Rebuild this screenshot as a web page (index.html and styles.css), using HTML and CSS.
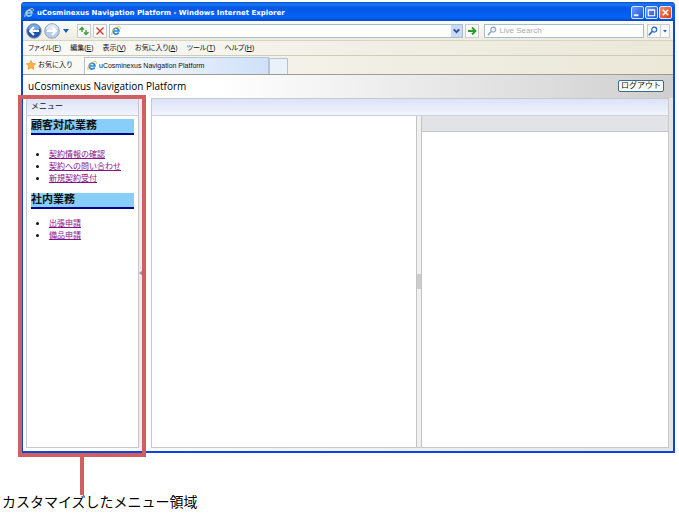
FILE: index.html
```html
<!DOCTYPE html>
<html lang="ja">
<head>
  <meta charset="UTF-8" />
  <meta name="viewport" content="width=device-width, initial-scale=1" />
  <title>uCosminexus Navigation Platform</title>
  <link rel="stylesheet" href="styles.css">
</head>
<body>

<svg class="symbols" aria-hidden="true">
  <symbol id="ie" viewBox="0 0 12 12">
    <path d="M9.2 7.8A3.5 3.5 0 1 1 9.6 6H3" fill="none" stroke="#2786dc" stroke-width="2"/>
    <path d="M1.2 11C-.5 8 6-.2 10.5.8c1.3.5.7 2 .1 2.800" fill="none" stroke="#e9b32c" stroke-width="1.200"/>
  </symbol>
  <symbol id="ie-light" viewBox="0 0 12 12">
    <path d="M9.2 7.8A3.5 3.5 0 1 1 9.6 6H3" fill="none" stroke="#8fd0ff" stroke-width="2"/>
    <path d="M1.2 11C-.5 8 6-.2 10.5.8c1.3.5.7 2 .1 2.800" fill="none" stroke="#f3cf62" stroke-width="1.200"/>
  </symbol>
  <symbol id="lens" viewBox="0 0 12 12">
    <path d="M1 11l4-4.500" stroke="currentColor" stroke-width="1.800"/>
    <circle cx="7.500" cy="4.300" r="3" fill="#eef6ff" stroke="currentColor" stroke-width="1.300"/>
  </symbol>
</svg>

<div class="window">
  <header class="title-bar">
    <svg class="icon"><use href="#ie-light"/></svg>
    <h1>uCosminexus Navigation Platform - Windows Internet Explorer</h1>
    <div class="window-buttons">
      <button type="button" aria-label="最小化"><svg viewBox="0 0 12 12"><path d="M2 9h5" stroke="#fff" stroke-width="2"/></svg></button>
      <button type="button" aria-label="最大化"><svg viewBox="0 0 12 12"><path d="M2.500 3.500h7v6h-7zM2.500 3h7" fill="none" stroke="#fff" stroke-width="1.200"/></svg></button>
      <button type="button" class="close" aria-label="閉じる"><svg viewBox="0 0 12 12"><path d="M3 3l6 6M9 3l-6 6" stroke="#fff" stroke-width="1.600"/></svg></button>
    </div>
  </header>

  <div class="nav-bar">
    <button type="button" class="round" aria-label="戻る"><svg viewBox="0 0 16 16"><circle cx="8" cy="8" r="7.300" fill="#1f55a8" stroke="#8c9cb4"/><path d="M2 6a6.200 6.200 0 0 1 12 0c-4 2-8 2-12 0z" fill="#7ba7e2"/><path d="M13 8H4.500M8 4L4 8l4 4" fill="none" stroke="#fff" stroke-width="2"/></svg></button>
    <button type="button" class="round" aria-label="進む"><svg viewBox="0 0 16 16"><circle cx="8" cy="8" r="7.300" fill="#b9cce6" stroke="#8fa3bd"/><path d="M2 6a6.200 6.200 0 0 1 12 0c-4 2-8 2-12 0z" fill="#dde8f5"/><path d="M3 8h8.500M8 4l4 4-4 4" fill="none" stroke="#fff" stroke-width="2"/></svg></button>
    <button type="button" class="history" aria-label="履歴"><svg viewBox="0 0 6 4"><path d="M0 0h6L3 4z" fill="#1b5fa8"/></svg></button>
    <button type="button" class="tool" aria-label="更新"><svg viewBox="0 0 12 12"><path d="M4 7V3M1.500 5L4 2.500 6 4.500M8 5v4M6 7.500l2 2 2.500-2.500" fill="none" stroke="#35a035" stroke-width="1.400"/></svg></button>
    <button type="button" class="tool" aria-label="中止"><svg viewBox="0 0 12 12"><path d="M2.500 2.500l7 7M9.500 2.500l-7 7" stroke="#d33a30" stroke-width="1.400"/></svg></button>
    <label class="address">
      <svg class="icon"><use href="#ie"/></svg>
      <input type="text" aria-label="アドレス">
      <button type="button" aria-label="アドレス一覧"><svg viewBox="0 0 10 10"><path d="M2.500 3.500L5 6l2.500-2.500" fill="none" stroke="#34518f" stroke-width="1.800"/></svg></button>
    </label>
    <button type="button" class="tool" aria-label="移動"><svg viewBox="0 0 12 12"><path d="M2 6h7M6 2.500L9.500 6 6 9.500" fill="none" stroke="#2d9a2d" stroke-width="1.800"/></svg></button>
    <label class="search">
      <svg class="icon"><use href="#lens"/></svg>
      <input type="text" placeholder="Live Search" aria-label="検索">
    </label>
    <div class="search-buttons">
      <button type="button" aria-label="検索する"><svg class="icon"><use href="#lens"/></svg></button>
      <button type="button" aria-label="検索オプション"><svg viewBox="0 0 8 12"><path d="M2 5h4L4 7.500z" fill="#1b5fc8"/></svg></button>
    </div>
  </div>

  <nav class="menu-bar">
    <a href="#">ファイル(<u>F</u>)</a>
    <a href="#">編集(<u>E</u>)</a>
    <a href="#">表示(<u>V</u>)</a>
    <a href="#">お気に入り(<u>A</u>)</a>
    <a href="#">ツール(<u>T</u>)</a>
    <a href="#">ヘルプ(<u>H</u>)</a>
  </nav>

  <div class="tab-bar">
    <button type="button" class="favorites">
      <svg class="icon" viewBox="0 0 12 12"><path d="M6 .5l1.700 3.600 3.900.5-2.900 2.700.8 4L6 9.400l-3.500 1.900.8-4L.4 4.600l3.900-.5z" fill="#fbb43a" stroke="#e08a1c" stroke-width=".7"/></svg>
      お気に入り
    </button>
    <a href="#" class="tab"><svg class="icon"><use href="#ie"/></svg>uCosminexus Navigation Platform</a>
    <button type="button" class="new-tab" aria-label="新しいタブ"></button>
  </div>

  <div class="page">
    <div class="page-header">
      <h2>uCosminexus Navigation Platform</h2>
      <button type="button" class="logout">ログアウト</button>
    </div>

    <div class="workspace">
      <aside class="menu-area">
        <div class="area-header">メニュー</div>
        <div class="menu-content">
          <h3>顧客対応業務</h3>
          <ul class="first-list">
            <li><a href="#">契約情報の確認</a></li>
            <li><a href="#">契約への問い合わせ</a></li>
            <li><a href="#">新規契約受付</a></li>
          </ul>
          <h3>社内業務</h3>
          <ul>
            <li><a href="#">出張申請</a></li>
            <li><a href="#">備品申請</a></li>
          </ul>
        </div>
        <div class="callout"></div>
      </aside>
      <div class="menu-splitter"><svg viewBox="0 0 4 6"><path d="M4 0v6L0 3z" fill="#999"/></svg></div>
      <main class="main-area">
        <div class="area-header"></div>
        <div class="panes">
          <section class="flow-pane"></section>
          <div class="splitter"><span></span></div>
          <section class="guide-pane"><div class="guide-header"></div></section>
        </div>
      </main>
    </div>
  </div>
</div>

<p class="caption">カスタマイズしたメニュー領域</p>

</body>
</html>
```

FILE: styles.css
```css
* {
  margin: 0;
  padding: 0;
  box-sizing: border-box;
}
body {
  background: #fff;
  color: #111;
  font-family: "Liberation Sans", "Noto Sans CJK JP", sans-serif;
  font-size: 8px;
  line-height: 12px;
  display: flex;
  flex-direction: column;
  min-height: 100vh;
  padding: 2px 4px 0 0;
}
a {
  color: inherit;
  text-decoration: none;
}
button, input {
  font: inherit;
  color: inherit;
  border: none;
  background: none;
}
svg {
  display: block;
  width: 100%;
  height: 100%;
}
.symbols {
  position: absolute;
  width: 0;
  height: 0;
}
.icon {
  flex: none;
  width: 10px;
  height: 10px;
}

.window {
  flex: 1;
  display: flex;
  flex-direction: column;
  margin-left: 21px;
  border: 2px solid #0a46dc;
  border-top: none;
  border-radius: 4px 4px 0 0;
  background: #f0eee3;
}

.title-bar {
  display: flex;
  align-items: center;
  gap: 3px;
  height: 19px;
  margin: 0 -2px;
  padding: 2px 3px 0;
  border-radius: 4px 4px 0 0;
  background: linear-gradient(#0a50c8, #1c78f4 12%, #0458e4 30%, #0462f6 80%, #0348c8);
  color: #fff;
}
.title-bar h1 {
  flex: 1;
  font-family: "DejaVu Sans", sans-serif;
  font-size: 7px;
  font-weight: bold;
}
.window-buttons {
  display: flex;
  gap: 1px;
}
.window-buttons button {
  width: 13px;
  height: 13px;
  border: 1px solid #dce8ff;
  border-radius: 2px;
  background: linear-gradient(135deg, #6b9cf8, #1c50d8);
}
.window-buttons .close {
  background: linear-gradient(135deg, #f09070, #d83c14);
}

.nav-bar {
  display: flex;
  align-items: center;
  gap: 2px;
  height: 20px;
  padding: 0 3px;
  background: linear-gradient(#fbfbf8, #efede2);
  border-bottom: 1px solid #d8d4c4;
}
.round {
  width: 16px;
  height: 16px;
}
.history {
  width: 6px;
  height: 4px;
  margin: 0 6px 0 1px;
}
.tool {
  width: 14px;
  height: 14px;
  border: 1px solid #c8ccd0;
  background: #fafaf8;
}
.address, .search {
  display: flex;
  align-items: center;
  height: 14px;
  border: 1px solid #a9bccb;
  background: #fff;
}
.address {
  flex: 359;
  padding-left: 1px;
}
.address input, .search input {
  flex: 1;
  min-width: 0;
  height: 12px;
}
.address button {
  width: 11px;
  height: 12px;
  background: #c9dafa;
}
.search {
  flex: 159;
  margin-left: 3px;
  padding-left: 2px;
  gap: 2px;
  color: #8aa4c0;
}
.search input::placeholder {
  color: #aaa;
}
.search-buttons {
  display: flex;
  align-items: center;
  height: 14px;
  margin-left: 1px;
  border: 1px solid #c8ccd0;
  background: #fafaf8;
  color: #1b5fc8;
}
.search-buttons button {
  width: 12px;
}
.search-buttons button + button {
  width: 9px;
  height: 12px;
  border-left: 1px solid #c8ccd0;
}

.menu-bar {
  display: flex;
  align-items: center;
  gap: 9px;
  height: 15px;
  padding: 0 5px;
  background: linear-gradient(to right, #fafaf7, #f0eee3 60%, #ebe8d8);
  border-bottom: 1px solid #cfccbd;
  font-size: 7px;
  font-feature-settings: "palt";
}

.tab-bar {
  display: flex;
  align-items: flex-end;
  height: 19px;
  padding-left: 3px;
  background: linear-gradient(to right, #fafaf7, #f0eee3 60%, #ebe8d8);
  border-bottom: 1px solid #9d9d94;
}
.favorites {
  display: flex;
  align-items: center;
  gap: 2px;
  width: 58px;
  height: 18px;
  font-size: 7px;
}
.tab {
  display: flex;
  align-items: center;
  gap: 2px;
  width: 185px;
  height: 17px;
  padding-left: 2px;
  border: 1px solid #b5c4d4;
  border-bottom: none;
  background: linear-gradient(to right, #fff, #cfe0f8);
  font-size: 7px;
}
.new-tab {
  width: 19px;
  height: 16px;
  border: 1px solid #b5c4d4;
  border-bottom: none;
  background: #e9f1fb;
}

.page {
  flex: 1;
  display: flex;
  flex-direction: column;
  padding: 0 4px 3px 3px;
  background: linear-gradient(to right, #fff, #e4e4e4);
}
.page-header {
  display: flex;
  align-items: center;
  justify-content: space-between;
  height: 23px;
  margin: 0 -4px 0 -3px;
  padding: 0 9px 2px 5px;
  background: linear-gradient(to right, #fff 30%, #cfcfcf);
}
.page-header h2 {
  font-family: "Open Sans", sans-serif;
  font-size: 10px;
  font-weight: normal;
  color: #000;
}
.logout {
  width: 46px;
  height: 12px;
  line-height: 10px;
  border: 1px solid #3c6c8c;
  border-radius: 2px;
  background: #fcfcf8;
}

.workspace {
  flex: 1;
  display: flex;
}
.area-header {
  height: 17px;
  padding: 0 4px;
  line-height: 15px;
  background: linear-gradient(#dce2f8, #f2f5fd);
  border-bottom: 1px solid #ccd0dc;
}
.menu-area {
  position: relative;
  width: 113px;
  border: 1px solid #c8c8c8;
  background: #fff;
}
.menu-content {
  padding: 3px 4px 0;
}
.menu-content h3 {
  height: 16px;
  font-size: 11px;
  line-height: 13px;
  color: #111;
  background: #87cefa;
  border-bottom: 2px solid #000090;
}
.menu-content ul {
  margin: 7px 0;
  padding-left: 18px;
}
.menu-content .first-list {
  margin: 12px 0 10px;
}
.menu-content li {
  height: 12px;
}
.menu-content li::marker {
  font-size: 11px;
}
.menu-content li a {
  color: #8a108a;
  text-decoration: underline;
}

/* marks the customized menu and points down to the caption */
.callout {
  position: absolute;
  inset: -4px -8px -10px -9px;
  border: 4px solid #d06060;
}
.callout::after {
  content: "";
  position: absolute;
  top: 100%;
  left: 58px;
  width: 4px;
  height: 42px;
  background: #d06060;
}

.menu-splitter {
  display: flex;
  align-items: center;
  width: 12px;
  background: linear-gradient(to right, #ececec 5px, #fff 5px);
}
.menu-splitter svg {
  width: 4px;
  height: 6px;
}
.main-area {
  flex: 1;
  display: flex;
  flex-direction: column;
  border: 1px solid #c8c8c8;
}
.panes {
  flex: 1;
  display: flex;
}
.flow-pane, .guide-pane {
  background: #fff;
}
.flow-pane {
  flex: 265;
}
.guide-pane {
  flex: 247;
}
.guide-header {
  height: 16px;
  background: #e2e3e6;
  border-bottom: 1px solid #c4c4c4;
}
.splitter {
  display: flex;
  align-items: center;
  width: 6px;
  background: #f0f0f0;
  border: solid #c4c4c4;
  border-width: 0 1px;
}
.splitter span {
  width: 4px;
  height: 15px;
  background: #ccc;
}

.caption {
  height: 62px;
  padding: 39px 0 0 2px;
  font-size: 14px;
  line-height: 20px;
  color: #000;
}
```
